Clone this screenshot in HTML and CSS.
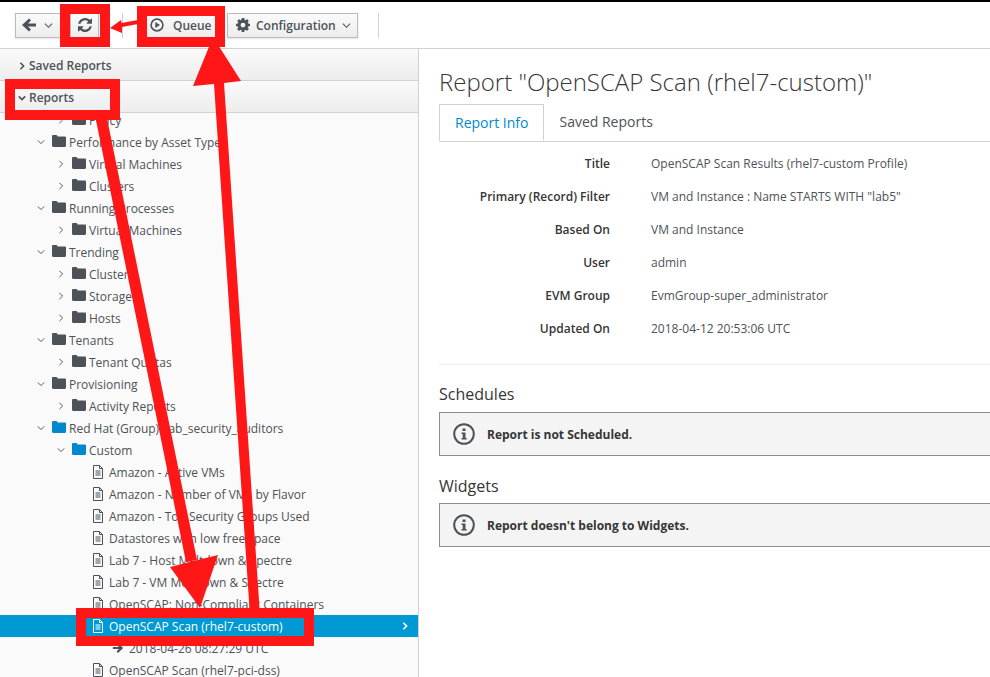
FILE: index.html
```html
<!DOCTYPE html>
<html lang="en">
<head>
    <meta charset="UTF-8">
    <meta name="viewport" content="width=device-width, initial-scale=1.0">
    <title>Report OpenSCAP Scan (rhel7-custom)</title>
    <link rel="stylesheet" href="styles.css">
</head>
<body>
    <svg class="sprites" width="0" height="0">
        <symbol id="i-refresh" viewBox="0 0 1536 1536"><path d="M1511 928q0 5-1 7-64 268-268 434.5t-478 166.5q-146 0-282.5-55t-243.5-157l-129 129q-19 19-45 19t-45-19-19-45v-448q0-26 19-45t45-19h448q26 0 45 19t19 45-19 45l-137 137q71 66 161 102t187 36q134 0 250-65t186-179q11-17 53-117 8-23 30-23h192q13 0 22.5 9.5t9.5 22.5zm25-800v448q0 26-19 45t-45 19h-448q-26 0-45-19t-19-45 19-45l138-138q-148-137-349-137-134 0-250 65t-186 179q-11 17-53 117-8 23-30 23h-199q-13 0-22.5-9.5t-9.5-22.5v-7q65-268 270-434.5t480-166.5q146 0 284 55.5t245 156.5l130-129q19-19 45-19t45 19 19 45z"/></symbol>
        <symbol id="i-gear" viewBox="0 0 1536 1536"><path d="M1024 768q0-106-75-181t-181-75-181 75-75 181 75 181 181 75 181-75 75-181zm512-109v222q0 12-8 23t-20 13l-185 28q-19 54-39 91 35 50 107 138 10 12 10 25t-9 23q-27 37-99 108t-94 71q-12 0-26-9l-138-108q-44 23-91 38-16 136-29 186-7 28-36 28h-222q-14 0-24.5-8.5t-11.5-21.5l-28-184q-49-16-90-37l-141 107q-10 9-25 9-14 0-25-11-126-114-165-168-7-10-7-23 0-12 8-23 15-21 51-66.5t54-70.5q-27-50-41-99l-183-27q-13-2-21-12.5t-8-23.5v-222q0-12 8-23t19-13l186-28q14-46 39-92-40-57-107-138-10-12-10-24 0-10 9-23 26-36 98.5-107.5t94.5-71.5q13 0 26 10l138 107q44-23 91-38 16-136 29-186 7-28 36-28h222q14 0 24.5 8.5t11.5 21.5l28 184q49 16 90 37l142-107q9-9 24-9 13 0 25 10 129 119 165 170 7 8 7 22 0 12-8 23-15 21-51 66.5t-54 70.5q26 50 41 98l183 28q13 2 21 12.5t8 23.5z"/></symbol>
        <symbol id="i-back" viewBox="0 0 14 14"><path d="M7 .5 0 7l7 6.500 2-2-3-3h8v-3H6l3-3z"/></symbol>
        <symbol id="i-right" viewBox="0 0 14 14"><path d="M7 1.200 13 7l-6 5.800-1.700-1.700 2.800-2.800H1V5.700h7.100L5.300 2.900z"/></symbol>
        <symbol id="i-folder" viewBox="0 0 14 12"><path d="M0 1.200C0 .5.5 0 1.200 0h3c.6 0 1 .4 1.200 1l.2.5h7.200c.7 0 1.200.5 1.200 1.200v8.100c0 .7-.5 1.200-1.200 1.200H1.200C.5 12 0 11.500 0 10.800z"/></symbol>
        <symbol id="i-file" viewBox="0 0 12 14"><path fill="none" stroke="currentColor" d="M1.500.5h6l3 3v10h-9zM7.500.5v3h3M3.500 6h5M3.500 8h5M3.500 10h5"/></symbol>
        <symbol id="i-play" viewBox="0 0 14 14"><circle cx="7" cy="7" r="5.900" fill="none" stroke="currentColor" stroke-width="1.600"/><path d="M5.300 4v6L10 7z"/></symbol>
        <symbol id="i-info" viewBox="0 0 22 22"><circle cx="11" cy="11" r="9.800" fill="none" stroke="currentColor" stroke-width="2"/><path d="M9.500 5.500h3v2.500h-3zM8.500 9.500h4v5.500h1.200v1.500H8.500V15h1.200v-4H8.500z"/></symbol>
        <symbol id="c-down" viewBox="0 0 10 10"><path fill="none" stroke="currentColor" stroke-width="1.200" d="M1 3l4 4 4-4"/></symbol>
        <symbol id="c-right" viewBox="0 0 10 10"><path fill="none" stroke="currentColor" stroke-width="1.200" d="M3 1l4 4-4 4"/></symbol>
        <symbol id="c-down-b" viewBox="0 0 10 10"><path fill="none" stroke="currentColor" stroke-width="2" d="M1 3l4 4 4-4"/></symbol>
        <symbol id="c-right-b" viewBox="0 0 10 10"><path fill="none" stroke="currentColor" stroke-width="2" d="M3 1l4 4-4 4"/></symbol>
    </svg>

    <div class="topstrip"></div>

    <div class="toolbar">
        <div class="btn-group">
            <button class="btn btn-back"><svg class="ico14"><use href="#i-back"/></svg><svg class="caret"><use href="#c-down"/></svg></button>
            <button class="btn btn-refresh"><svg class="ico14"><use href="#i-refresh"/></svg></button>
        </div>
        <span class="sep sep-first"></span>
        <button class="btn btn-queue"><svg class="ico14"><use href="#i-play"/></svg>Queue</button>
        <button class="btn btn-config"><svg class="ico14"><use href="#i-gear"/></svg>Configuration<svg class="caret"><use href="#c-down"/></svg></button>
        <span class="sep sep-last"></span>
    </div>

    <div class="main">
        <div class="sidebar">
            <div class="acc-head"><svg class="acc-caret"><use href="#c-right-b"/></svg>Saved Reports</div>
            <div class="acc-head"><svg class="acc-caret"><use href="#c-down-b"/></svg>Reports</div>
            <div class="tree" id="tree"></div>
        </div>

        <div class="content">
            <h1>Report "OpenSCAP Scan (rhel7-custom)"</h1>
            <div class="tabs">
                <div class="tab active">Report Info</div>
                <div class="tab">Saved Reports</div>
            </div>
            <div class="details">
                <div class="detail-row"><label>Title</label><span>OpenSCAP Scan Results (rhel7-custom Profile)</span></div>
                <div class="detail-row"><label>Primary (Record) Filter</label><span>VM and Instance : Name STARTS WITH "lab5"</span></div>
                <div class="detail-row"><label>Based On</label><span>VM and Instance</span></div>
                <div class="detail-row"><label>User</label><span>admin</span></div>
                <div class="detail-row"><label>EVM Group</label><span>EvmGroup-super_administrator</span></div>
                <div class="detail-row"><label>Updated On</label><span>2018-04-12 20:53:06 UTC</span></div>
            </div>
            <hr class="divider">
            <h3>Schedules</h3>
            <div class="note"><svg class="ico22"><use href="#i-info"/></svg><strong>Report is not Scheduled.</strong></div>
            <h3>Widgets</h3>
            <div class="note"><svg class="ico22"><use href="#i-info"/></svg><strong>Report doesn't belong to Widgets.</strong></div>
        </div>
    </div>

    <!-- red markup drawn over the screenshot -->
    <svg class="markup" width="990" height="677" viewBox="0 0 990 677">
        <g fill="none" stroke="#ff1616" stroke-width="10">
            <rect x="65" y="9" width="40" height="33"/>
            <rect x="142" y="11" width="78" height="31"/>
            <rect x="10" y="84" width="105" height="31"/>
            <rect x="81" y="613" width="228" height="28"/>
        </g>
        <g fill="#ff1616">
            <path d="M138 20 121.500 23 121 20 110 28 122 33 122 27 138 24z"/>
            <path d="M94.500 113 105.500 111 197 560 186 562z"/>
            <path d="M170 567 218 555 200 608z"/>
            <path d="M213 37 193 86 214 84 249.500 608 259.500 608 224 83 241 81z"/>
        </g>
    </svg>

    <script>
        // depth, icon, label, expanded
        const rows = [
            [2, 'folder', 'Policy', false],
            [1, 'folder', 'Performance by Asset Type', true],
            [2, 'folder', 'Virtual Machines', false],
            [2, 'folder', 'Clusters', false],
            [1, 'folder', 'Running Processes', true],
            [2, 'folder', 'Virtual Machines', false],
            [1, 'folder', 'Trending', true],
            [2, 'folder', 'Clusters', false],
            [2, 'folder', 'Storage', false],
            [2, 'folder', 'Hosts', false],
            [1, 'folder', 'Tenants', true],
            [2, 'folder', 'Tenant Quotas', false],
            [1, 'folder', 'Provisioning', true],
            [2, 'folder', 'Activity Reports', false],
            [1, 'blue', 'Red Hat (Group): lab_security_auditors', true],
            [2, 'blue', 'Custom', true],
            [3, 'file', 'Amazon - Active VMs'],
            [3, 'file', 'Amazon - Number of VMs by Flavor'],
            [3, 'file', 'Amazon - Top Security Groups Used'],
            [3, 'file', 'Datastores with low free space'],
            [3, 'file', 'Lab 7 - Host Meltdown & Spectre'],
            [3, 'file', 'Lab 7 - VM Meltdown & Spectre'],
            [3, 'file', 'OpenSCAP: Non-Compliant Containers'],
            [3, 'file', 'OpenSCAP Scan (rhel7-custom)', undefined, 'selected'],
            [4, 'right', '2018-04-26 08:27:29 UTC'],
            [3, 'file', 'OpenSCAP Scan (rhel7-pci-dss)']
        ];
        const tree = document.getElementById('tree');
        rows.forEach(([depth, icon, label, open, cls]) => {
            const row = document.createElement('div');
            row.className = 'tree-row depth-' + depth + (cls ? ' ' + cls : '');
            let html = '';
            if (open !== undefined) {
                html += `<svg class="twist"><use href="#${open ? 'c-down' : 'c-right'}"/></svg>`;
            }
            if (icon === 'folder' || icon === 'blue') {
                html += `<svg class="node-ico folder ${icon}"><use href="#i-folder"/></svg>`;
            } else if (icon === 'file') {
                html += `<svg class="node-ico file"><use href="#i-file"/></svg>`;
            } else {
                html += `<svg class="node-ico arrow"><use href="#i-right"/></svg>`;
            }
            html += `<span class="node-label"></span>`;
            if (cls) html += `<svg class="row-caret"><use href="#c-right-b"/></svg>`;
            row.innerHTML = html;
            row.querySelector('.node-label').textContent = label;
            tree.appendChild(row);
        });
    </script>
</body>
</html>
```

FILE: styles.css
```css
html, body {
    height: 677px;
    overflow: hidden;
}
body {
    font-family: "Open Sans", sans-serif;
    font-size: 12px;
    color: #363636;
    background-color: #fff;
    margin: 0;
    position: relative;
}
.sprites {
    display: block;
    height: 0;
}
svg {
    fill: currentColor;
}
.topstrip {
    height: 2px;
    background-color: #000;
}
.toolbar {
    display: flex;
    align-items: center;
    height: 46px;
    padding-left: 15px;
    border-bottom: 1px solid #d1d1d1;
    box-sizing: content-box;
}
.btn-group {
    display: flex;
}
.btn {
    display: flex;
    align-items: center;
    height: 25px;
    padding: 0 8px;
    font-family: inherit;
    font-size: 12px;
    font-weight: 600;
    color: #4d5258;
    background: linear-gradient(#fafafa, #ededed);
    border: 1px solid #bbb;
    box-shadow: 0 1px 2px rgba(0, 0, 0, 0.1);
    box-sizing: border-box;
}
.btn-back {
    width: 56px;
    gap: 8px;
    padding: 0 6px;
}
.btn-refresh {
    width: 29px;
    margin-left: -1px;
    justify-content: center;
}
.btn-queue {
    width: 72px;
    gap: 9px;
    padding: 0 4px;
}
.btn-config {
    width: 131px;
    margin-left: 10px;
    gap: 6px;
}
.sep {
    width: 1px;
    height: 25px;
    background-color: #d1d1d1;
}
.sep-first {
    margin: 0 22px 0 23px;
}
.sep-last {
    margin-left: 20px;
}
.ico14 {
    width: 14px;
    height: 14px;
    flex: none;
}
.caret {
    width: 9px;
    height: 9px;
    flex: none;
}
.main {
    display: flex;
}
.sidebar {
    width: 418px;
    height: 628px;
    flex: none;
    background-color: #fafafa;
    border-right: 1px solid #d1d1d1;
    overflow: hidden;
}
.acc-head {
    display: flex;
    align-items: center;
    position: relative;
    z-index: 1;
    height: 32px;
    padding-left: 18px;
    padding-top: 2px;
    font-weight: 600;
    color: #4d5258;
    background: linear-gradient(#fafafa, #ededed);
    border-bottom: 1px solid #d1d1d1;
    box-sizing: border-box;
}
.acc-caret {
    width: 8px;
    height: 8px;
    margin-right: 3px;
}
.tree {
    margin-top: -4px;
    color: #4d5258;
}
.tree-row {
    position: relative;
    display: flex;
    align-items: center;
    height: 22px;
    white-space: nowrap;
}
.twist {
    position: absolute;
    top: 7px;
    width: 8px;
    height: 8px;
    color: #4d5258;
}
.depth-1 { padding-left: 52px; }
.depth-1 .twist { left: 37px; }
.depth-2 { padding-left: 72px; }
.depth-2 .twist { left: 57px; }
.depth-3 { padding-left: 92px; }
.depth-4 { padding-left: 112px; }
.node-ico {
    flex: none;
    margin-right: 3px;
}
.folder {
    width: 14px;
    height: 12px;
    margin-top: -3px;
}
.blue {
    color: #0088ce;
}
.file {
    width: 12px;
    height: 14px;
    margin-right: 5px;
}
.arrow {
    width: 12px;
    height: 12px;
    margin-right: 5px;
}
.selected {
    background-color: #0099d3;
    color: #fff;
}
.row-caret {
    position: absolute;
    right: 9px;
    top: 7px;
    width: 8px;
    height: 8px;
}
.content {
    flex: 1;
    min-width: 0;
    padding-left: 20px;
}
h1 {
    margin: 17px 0 0;
    font-size: 24px;
    font-weight: 300;
    line-height: 32px;
    color: #363636;
    white-space: nowrap;
}
.tabs {
    display: flex;
    margin-top: 6px;
    height: 37px;
    border-bottom: 1px solid #d1d1d1;
    box-sizing: content-box;
    font-size: 14px;
}
.tab {
    padding: 0 15px;
    line-height: 36px;
    color: #4d5258;
    white-space: nowrap;
}
.tab.active {
    color: #0088ce;
    background-color: #fff;
    border: 1px solid #d1d1d1;
    border-bottom: 1px solid #fff;
    height: 37px;
    box-sizing: border-box;
    padding: 0 15px;
}
.details {
    padding-top: 5px;
}
.detail-row {
    display: flex;
    align-items: center;
    height: 33px;
    color: #4d5258;
}
.detail-row label {
    width: 171px;
    flex: none;
    text-align: right;
    font-weight: 600;
    color: #363636;
}
.detail-row span {
    margin-left: 41px;
}
.divider {
    height: 1px;
    margin: 19px 0 0;
    border: 0;
    background-color: #ededed;
}
h3 {
    margin: 18px 0 7px;
    font-size: 16px;
    font-weight: 400;
    line-height: 22px;
    color: #363636;
}
.note + h3 {
    margin: 19px 0 6px;
}
.note {
    display: flex;
    align-items: center;
    gap: 12px;
    height: 44px;
    padding-left: 13px;
    background-color: #f4f4f4;
    border: 1px solid #8b8d8f;
    border-right: 0;
    box-sizing: border-box;
    color: #363636;
}
.note strong {
    font-weight: 700;
}
.ico22 {
    width: 22px;
    height: 22px;
    color: #4d5258;
}
.markup {
    position: absolute;
    left: 0;
    top: 0;
    z-index: 2;
}
```
